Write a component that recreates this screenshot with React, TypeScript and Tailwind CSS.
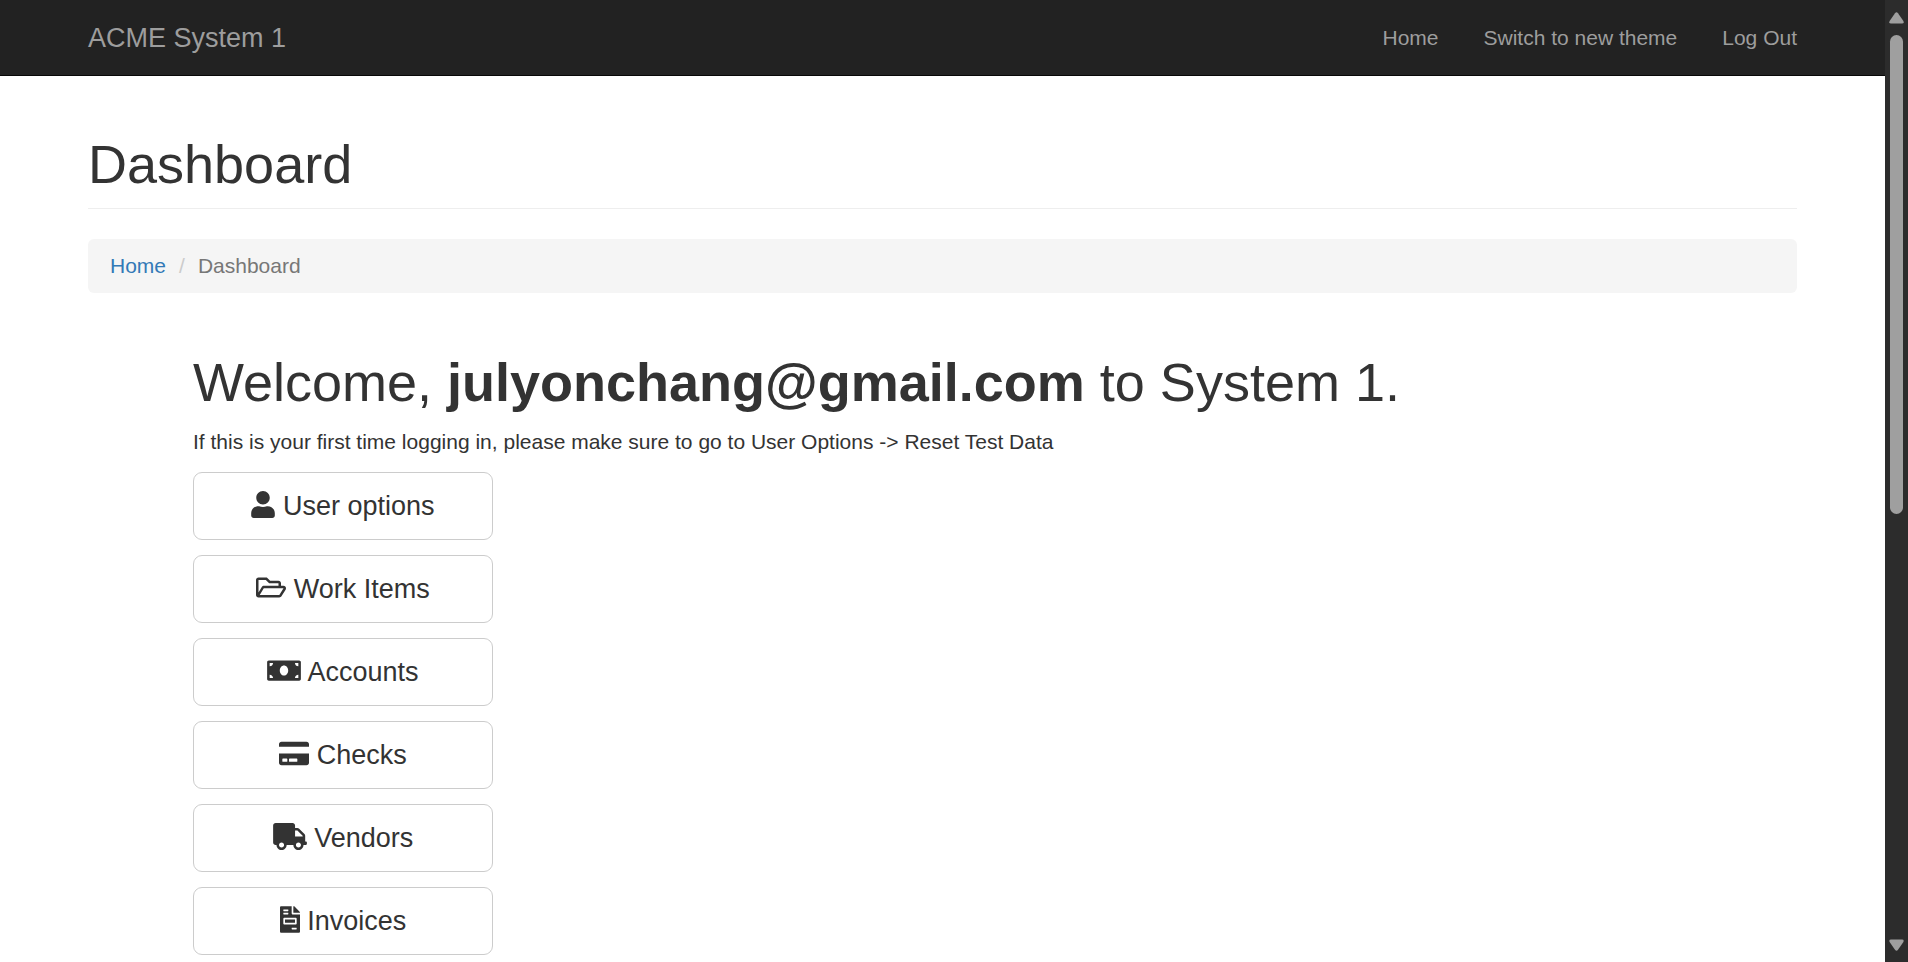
import type { IconType } from 'react-icons';
import { FaUser, FaRegFolderOpen, FaMoneyBill, FaCreditCard, FaTruck, FaFileInvoice } from 'react-icons/fa';

const navLinks = ['Home', 'Switch to new theme', 'Log Out'];

type Action = { label: string; icon: IconType; iconWidth: string };

const actions: Action[] = [
  { label: 'User options', icon: FaUser, iconWidth: 'w-[24px]' },
  { label: 'Work Items', icon: FaRegFolderOpen, iconWidth: 'w-[30px]' },
  { label: 'Accounts', icon: FaMoneyBill, iconWidth: 'w-[34px]' },
  { label: 'Checks', icon: FaCreditCard, iconWidth: 'w-[30px]' },
  { label: 'Vendors', icon: FaTruck, iconWidth: 'w-[34px]' },
  { label: 'Invoices', icon: FaFileInvoice, iconWidth: 'w-[20px]' },
];

function Navbar() {
  return (
    <header className="border-b border-[#080808] bg-[#222]">
      <nav className="mx-auto flex h-[75px] max-w-[1755px] items-center justify-between px-[23px] text-[#9d9d9d]">
        <a href="#" className="text-[27px] leading-[30px]">ACME System 1</a>
        <ul className="flex gap-[45px]">
          {navLinks.map((label) => (
            <li key={label}>
              <a href="#">{label}</a>
            </li>
          ))}
        </ul>
      </nav>
    </header>
  );
}

function Breadcrumb() {
  return (
    <nav aria-label="Breadcrumb" className="mt-[30px] rounded-md bg-[#f5f5f5] px-[22px] py-3">
      <ol className="flex">
        <li>
          <a href="#" className="text-[#337ab7]">Home</a>
        </li>
        <li className="text-[#777]">
          <span aria-hidden="true" className="px-[13px] text-[#ccc]">/</span>
          Dashboard
        </li>
      </ol>
    </nav>
  );
}

function ActionButton({ label, icon: Icon, iconWidth }: Action) {
  return (
    <button
      type="button"
      className="block w-[300px] rounded-[9px] border border-[#ccc] bg-white px-6 py-[15px] text-center text-[27px] leading-[36px]"
    >
      <Icon aria-hidden="true" className={`inline-block h-[27px] align-[-3px] ${iconWidth}`} /> {label}
    </button>
  );
}

function Scrollbar() {
  return (
    <div aria-hidden="true" className="sticky top-0 flex h-screen w-[23px] shrink-0 flex-col items-center bg-[#2c2c2c] pt-[12px] pb-[11px] pr-px">
      <svg width="15" height="12" viewBox="0 0 15 12" className="shrink-0 fill-[#9f9f9f]">
        <path d="M6 1.2Q7.5-.6 9 1.2L14.4 9Q15.4 11.6 13 11.6H2Q-.4 11.6.6 9Z" />
      </svg>
      <div className="mt-[11px] h-[479px] w-[13px] rounded-full bg-[#9f9f9f]" />
      <svg width="15" height="12" viewBox="0 0 15 12" className="mt-auto shrink-0 fill-[#9f9f9f]">
        <path d="M6 10.8Q7.5 12.6 9 10.8L14.4 3Q15.4.4 13 .4H2Q-.4.4.6 3Z" />
      </svg>
    </div>
  );
}

export default function App() {
  return (
    <div className="flex min-h-screen bg-white font-['Liberation_Sans',Arial,sans-serif] text-[21px] leading-[30px] text-[#333]">
      <div className="min-w-0 grow">
        <Navbar />
        <main className="mx-auto max-w-[1755px] px-[23px] pt-[59px]">
          <div className="border-b border-[#eee] pb-[14px]">
            <h1 className="text-[54px] leading-[59px]">Dashboard</h1>
          </div>
          <Breadcrumb />
          <section className="mt-[60px] pl-[105px]">
            <h2 className="text-[54px] leading-[59px]">
              Welcome, <strong className="font-bold">julyonchang@gmail.com</strong> to System 1.
            </h2>
            <p className="mt-[15px]">
              If this is your first time logging in, please make sure to go to User Options -&gt; Reset Test Data
            </p>
            <div className="mt-[15px] flex flex-col gap-[15px]">
              {actions.map((action) => (
                <ActionButton key={action.label} {...action} />
              ))}
            </div>
          </section>
        </main>
      </div>
      <Scrollbar />
    </div>
  );
}
